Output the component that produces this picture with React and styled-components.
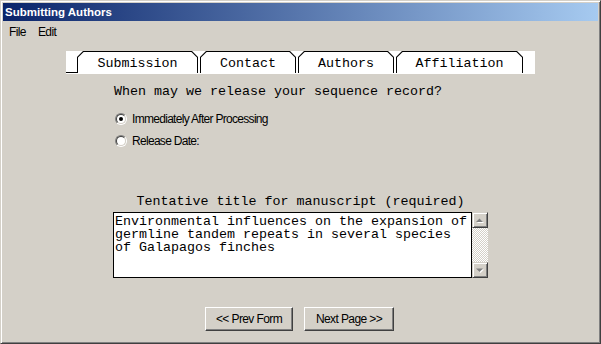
import React from 'react';
import styled, { createGlobalStyle } from 'styled-components';

const Global = createGlobalStyle`
  html, body { margin: 0; padding: 0; background: #d4d0c8; }
  body { width: 601px; height: 344px; overflow: hidden; }
`;

const UI = `"Liberation Sans", Arial, sans-serif`;
const MONO = `"Liberation Mono", "Courier New", monospace`;

const Window = styled.div`
  box-sizing: border-box;
  width: 601px;
  height: 344px;
  background: #d4d0c8;
  border: 1px solid;
  border-color: #d4d0c8 #404040 #404040 #d4d0c8;
  box-shadow: inset 1px 1px #fff, inset -1px -1px #808080;
  padding: 2px;
  display: flex;
  flex-direction: column;
`;

const TitleBar = styled.div`
  height: 18px;
  flex: none;
  background: linear-gradient(to right, #0a246a, #a6caf0);
  color: #fff;
  font: bold 11.5px "Liberation Sans", Arial, sans-serif;
  display: flex;
  align-items: center;
  padding-left: 2px;
`;

const MenuBar = styled.div`
  height: 20px;
  display: flex;
  align-items: center;
  gap: 12px;
  padding: 1px 0 0 6px;
  box-sizing: border-box;
  font: 12px ${UI};
  letter-spacing: -0.6px;
  color: #000;
`;

const MenuItem = styled.span``;

const TabStrip = styled.div`
  width: 469px;
  height: 23px;
  margin: 10px auto 0;
  background: #fff;
  display: flex;
  align-items: flex-start;
`;

const TabLead = styled.div`
  box-sizing: border-box;
  width: 11px;
  height: 22px;
  border-bottom: 1px solid #000;
`;

const Tab = styled.div`
  box-sizing: border-box;
  width: ${p => p.$w}px;
  height: 22px;
  margin-left: ${p => (p.$first ? 0 : 2)}px;
  background: #000;
  padding: 1px 1px 0;
  clip-path: polygon(6px 0, calc(100% - 6px) 0, 100% 6px, 100% 100%, 0 100%, 0 6px);
`;

const TabFace = styled.div`
  box-sizing: border-box;
  height: 100%;
  padding-top: 1px;
  background: #fff;
  clip-path: polygon(5.6px 0, calc(100% - 5.6px) 0, 100% 5.6px, 100% 100%, 0 100%, 0 5.6px);
  display: flex;
  align-items: center;
  justify-content: center;
  font: 13.33px ${MONO};
  color: #000;
`;

const Question = styled.div`
  margin: 10px 0 0 111px;
  font: 13.33px/16px ${MONO};
  color: #000;
`;

const RadioGroup = styled.div`
  margin: 8px 0 0 112px;
  display: flex;
  flex-direction: column;
`;

const RadioRow = styled.label`
  height: 22px;
  display: flex;
  align-items: center;
  gap: 5px;
  font: 12px ${UI};
  letter-spacing: -0.7px;
  color: #000;
`;

const RadioOuter = styled.span`
  box-sizing: border-box;
  width: 12px;
  height: 12px;
  border-radius: 50%;
  border: 1px solid;
  border-color: #808080 #fff #fff #808080;
  display: flex;
`;

const RadioInner = styled.span`
  box-sizing: border-box;
  flex: 1;
  border-radius: 50%;
  border: 1px solid;
  border-color: #404040 #d4d0c8 #d4d0c8 #404040;
  background: #fff;
  display: flex;
  align-items: center;
  justify-content: center;
`;

const RadioDot = styled.span`
  width: 4px;
  height: 4px;
  border-radius: 50%;
  background: #000;
`;

const FieldLabel = styled.div`
  margin-top: 42px;
  text-align: center;
  font: 13.33px/16px ${MONO};
  color: #000;
`;

const TextBox = styled.div`
  margin: 2px auto 0;
  width: 375px;
  height: 66px;
  display: flex;
`;

const TextPane = styled.div`
  box-sizing: border-box;
  width: 359px;
  height: 100%;
  border: 1px solid #000;
  background: #fff;
  padding: 2px 1px 1px;
  font: 13.33px/13px ${MONO};
  color: #000;
  white-space: pre;
`;

const ScrollBar = styled.div`
  width: 16px;
  height: 100%;
  display: flex;
  flex-direction: column;
`;

const ScrollButton = styled.div`
  box-sizing: border-box;
  width: 16px;
  height: 16px;
  flex: none;
  background: #d4d0c8;
  border: 1px solid;
  border-color: #d4d0c8 #404040 #404040 #d4d0c8;
  box-shadow: inset 1px 1px #fff, inset -1px -1px #808080;
  display: flex;
  align-items: center;
  justify-content: center;
`;

const ScrollTrack = styled.div`
  flex: 1;
  background: repeating-conic-gradient(#d4d0c8 0 25%, #fff 0 50%) 0 0 / 2px 2px;
`;

const ButtonRow = styled.div`
  margin-top: 29px;
  display: flex;
  justify-content: center;
  gap: 11px;
  padding-right: 2px;
`;

const Button = styled.button`
  box-sizing: border-box;
  width: ${p => p.$w}px;
  height: 24px;
  padding: 0;
  background: #d4d0c8;
  border: 1px solid;
  border-color: #fff #404040 #404040 #fff;
  box-shadow: inset -1px -1px #808080, inset 1px 1px #d4d0c8;
  font: 12px ${UI};
  letter-spacing: -0.6px;
  color: #000;
`;

const Arrow = ({ down }) => (
  <svg width="8" height="5" viewBox="0 0 8 5" style={{ overflow: 'visible' }}>
    {down ? (
      <>
        <polygon points="0,0.5 7,0.5 3.5,4" fill="#fff" transform="translate(1,1)" />
        <polygon points="0,0.5 7,0.5 3.5,4" fill="#808080" />
      </>
    ) : (
      <>
        <polygon points="0,4 7,4 3.5,0.5" fill="#fff" transform="translate(1,1)" />
        <polygon points="0,4 7,4 3.5,0.5" fill="#808080" />
      </>
    )}
  </svg>
);

const Radio = ({ checked, children }) => (
  <RadioRow>
    <RadioOuter>
      <RadioInner>{checked && <RadioDot />}</RadioInner>
    </RadioOuter>
    {children}
  </RadioRow>
);

const tabs = [
  { label: 'Submission', w: 121 },
  { label: 'Contact', w: 96 },
  { label: 'Authors', w: 96 },
  { label: 'Affiliation', w: 127 },
];

export default function App() {
  return (
    <>
      <Global />
      <Window>
        <TitleBar>Submitting Authors</TitleBar>
        <MenuBar>
          <MenuItem>File</MenuItem>
          <MenuItem>Edit</MenuItem>
        </MenuBar>
        <TabStrip>
          <TabLead />
          {tabs.map((t, i) => (
            <Tab key={t.label} $w={t.w} $first={i === 0}>
              <TabFace>{t.label}</TabFace>
            </Tab>
          ))}
        </TabStrip>
        <Question>When may we release your sequence record?</Question>
        <RadioGroup>
          <Radio checked>Immediately After Processing</Radio>
          <Radio>Release Date:</Radio>
        </RadioGroup>
        <FieldLabel>Tentative title for manuscript (required)</FieldLabel>
        <TextBox>
          <TextPane>
            {'Environmental influences on the expansion of\ngermline tandem repeats in several species\nof Galapagos finches'}
          </TextPane>
          <ScrollBar>
            <ScrollButton><Arrow /></ScrollButton>
            <ScrollTrack />
            <ScrollButton><Arrow down /></ScrollButton>
          </ScrollBar>
        </TextBox>
        <ButtonRow>
          <Button $w={88}>&lt;&lt; Prev Form</Button>
          <Button $w={90}>Next Page &gt;&gt;</Button>
        </ButtonRow>
      </Window>
    </>
  );
}
